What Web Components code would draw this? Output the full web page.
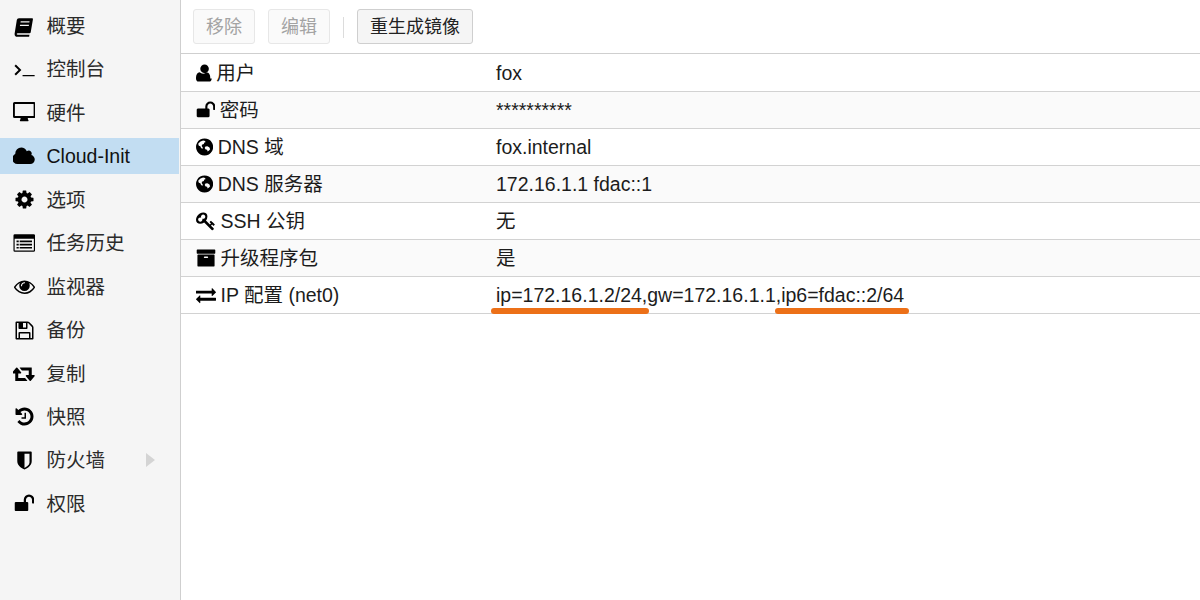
<!DOCTYPE html>
<html lang="zh">
<head>
<meta charset="utf-8">
<title>Cloud-Init</title>
<style>
  html, body { margin: 0; height: 100%; background: #fff; overflow: hidden; }
  body { font: 19.5px/22px "Liberation Sans", "Noto Sans CJK SC", sans-serif; color: #1c1c1c; }
</style>
</head>
<body>
<vm-panel>
  <vm-nav slot="nav">
    <vm-nav-item icon="book">概要</vm-nav-item>
    <vm-nav-item icon="terminal">控制台</vm-nav-item>
    <vm-nav-item icon="desktop">硬件</vm-nav-item>
    <vm-nav-item icon="cloud" selected>Cloud-Init</vm-nav-item>
    <vm-nav-item icon="cog">选项</vm-nav-item>
    <vm-nav-item icon="list">任务历史</vm-nav-item>
    <vm-nav-item icon="eye">监视器</vm-nav-item>
    <vm-nav-item icon="floppy">备份</vm-nav-item>
    <vm-nav-item icon="retweet">复制</vm-nav-item>
    <vm-nav-item icon="history">快照</vm-nav-item>
    <vm-nav-item icon="shield" expandable>防火墙</vm-nav-item>
    <vm-nav-item icon="unlock">权限</vm-nav-item>
  </vm-nav>
  <vm-toolbar slot="toolbar">
    <vm-button disabled>移除</vm-button>
    <vm-button disabled>编辑</vm-button>
    <vm-sep></vm-sep>
    <vm-button>重生成镜像</vm-button>
  </vm-toolbar>
  <vm-row icon="user">用户<span slot="value">fox</span></vm-row>
  <vm-row icon="unlock" alt>密码<span slot="value">**********</span></vm-row>
  <vm-row icon="globe">DNS 域<span slot="value">fox.internal</span></vm-row>
  <vm-row icon="globe" alt>DNS 服务器<span slot="value">172.16.1.1 fdac::1</span></vm-row>
  <vm-row icon="key">SSH 公钥<span slot="value">无</span></vm-row>
  <vm-row icon="archive" alt>升级程序包<span slot="value">是</span></vm-row>
  <vm-row icon="exchange">IP 配置 (net0)<span slot="value">ip=172.16.1.2/24,gw=172.16.1.1,ip6=fdac::2/64</span>
    <vm-mark slot="value" left="-5" width="158"></vm-mark>
    <vm-mark slot="value" left="279" width="134"></vm-mark>
  </vm-row>
</vm-panel>

<script>
const ICONS = {
  book: ['0 0 1664 1792', 'M420 190h1130q80 0 66 80l-190 1110q-14 90-100 90H330q-100 0-100 70t100 70h990l-30 170H270Q50 1780 50 1540q0-50 15-120L240 340q20-150 180-150zM570 450l-20 110h760l20-110zM520 740l-20 110h760l20-110z'],
  terminal: ['0 0 1792 1792', 'M40 590l120-120 470 470-470 470-120-120 350-350zM730 1370h1030v100H730z'],
  desktop: ['0 0 1920 1792', 'M130 0h1660q130 0 130 130v1110q0 130-130 130h-530q0 120 60 190 20 30-10 60-15 15-50 15H650q-35 0-50-15-30-30-10-60 60-70 60-190H130q-130 0-130-130V130Q0 0 130 0zm50 170q-20 0-20 20v980q0 20 20 20h1560q20 0 20-20V190q0-20-20-20z'],
  cloud: ['0 0 1920 1792', 'M1856 1152q0 159-112.5 271.5t-271.5 112.5h-1088q-185 0-316.5-131.5t-131.5-316.5q0-132 71-241.5t187-163.5q-2-28-2-43 0-212 150-362t362-150q158 0 286.5 88t187.5 230q70-62 166-62 106 0 181 75t75 181q0 75-41 138 129 30 213 134.5t84 239.5z'],
  cog: ['0 0 1792 1792', 'M1152 896q0-106-75-181t-181-75-181 75-75 181 75 181 181 75 181-75 75-181zm512-109v222q0 12-8 23t-20 13l-185 28q-19 54-39 91 35 50 107 138 10 12 10 25t-9 23q-27 37-99 108t-94 71q-12 0-26-9l-138-108q-44 23-91 38-16 136-29 186-7 28-36 28h-222q-14 0-24.5-8.5t-11.5-21.5l-28-184q-49-16-90-37l-141 107q-10 9-25 9-14 0-25-11-126-114-165-168-7-10-7-23 0-12 8-23 15-21 51-66.5t54-70.5q-27-50-41-99l-183-27q-13-2-21-12.5t-8-23.5v-222q0-12 8-23t19-13l186-28q14-46 39-92-40-57-107-138-10-12-10-24 0-10 9-23 26-36 98.5-107.5t94.5-71.5q13 0 26 10l138 107q44-23 91-38 16-136 29-186 7-28 36-28h222q14 0 24.5 8.5t11.5 21.5l28 184q49 16 90 37l142-107q9-9 24-9 13 0 25 10 129 119 165 170 7 8 7 22 0 12-8 23-15 21-51 66.5t-54 70.5q26 50 41 98l183 28q13 2 21 12.5t8 23.5z'],
  list: ['0 0 1920 1792', 'M150 100h1620q110 0 110 110v1280q0 110-110 110H150q-110 0-110-110V210q0-110 110-110zm-10 390v980q0 30 30 30h1580q30 0 30-30V490zM300 650h190v140H300zm270 0h1050v140H570zM300 920h190v140H300zm270 0h1050v140H570zM300 1190h190v140H300zm270 0h1050v140H570z'],
  eye: ['0 0 1792 1792', 'M1664 960q-152-236-381-353 61 104 61 225 0 185-131.5 316.5t-316.5 131.5-316.5-131.5-131.5-316.5q0-121 61-225-229 117-381 353 133 205 333.5 326.5t434.5 121.5 434.5-121.5 333.5-326.5zm-720-384q0-20-14-34t-34-14q-125 0-214.5 89.5t-89.5 214.5q0 20 14 34t34 14 34-14 14-34q0-86 61-147t147-61q20 0 34-14t14-34zm848 384q0 34-20 69-140 230-376.5 368.5t-499.5 138.5-499.5-139-376.5-368q-20-35-20-69t20-69q140-229 376.5-368t499.5-139 499.5 139 376.5 368q20 35 20 69z'],
  floppy: ['0 0 1792 1792', 'M512 1536h768v-384h-768v384zm896 0h128v-896q0-14-10-38.5t-20-34.5l-281-281q-10-10-34-20t-39-10v416q0 40-28 68t-68 28h-576q-40 0-68-28t-28-68v-416h-128v1280h128v-416q0-40 28-68t68-28h832q40 0 68 28t28 68v416zm-384-928v-320q0-13-9.5-22.5t-22.5-9.5h-192q-13 0-22.5 9.5t-9.5 22.5v320q0 13 9.5 22.5t22.5 9.5h192q13 0 22.5-9.5t9.5-22.5zm640 32v928q0 40-28 68t-68 28h-1344q-40 0-68-28t-28-68v-1344q0-40 28-68t68-28h928q40 0 88 20t76 48l280 280q28 28 48 76t20 88z'],
  retweet: ['0 0 1920 1792', 'M1216 1504q0 13-9.5 22.5t-22.5 9.5h-960q-8 0-13.5-2t-9-7-5.5-8-3-11.5-1-11.5v-600h-192q-26 0-45-19t-19-45q0-24 15-41l320-384q19-22 49-22t49 22l320 384q15 17 15 41 0 26-19 45t-45 19h-192v384h576q16 0 25 11l160 192q7 10 7 21zm640-416q0 24-15 41l-320 384q-20 23-49 23t-49-23l-320-384q-15-17-15-41 0-26 19-45t45-19h192v-384h-576q-16 0-25-12l-160-192q-7-9-7-20 0-13 9.5-22.5t22.5-9.5h960q8 0 13.5 2t9 7 5.5 8 3 11.5 1 11.5v600h192q26 0 45 19t19 45z'],
  history: ['0 0 1792 1792', 'M1664 896q0 156-61 298t-164 245-245 164-298 61q-172 0-327-72.5t-264-204.5q-7-10-6.5-22.5t8.5-20.5l137-138q10-9 25-9 16 2 23 12 73 95 179 147t225 52q104 0 198.5-40.5t163.5-109.5 109.5-163.5 40.5-198.5-40.5-198.5-109.5-163.5-163.5-109.5-198.5-40.5q-98 0-188 35.5t-160 101.5l137 138q31 30 14 69-17 40-59 40h-448q-26 0-45-19t-19-45v-448q0-42 40-59 39-17 69 14l130 129q107-101 244.5-156.5t284.5-55.5q156 0 298 61t245 164 164 245 61 298zm-640-288v448q0 14-9 23t-23 9h-320q-14 0-23-9t-9-23v-64q0-14 9-23t23-9h224v-352q0-14 9-23t23-9h64q14 0 23 9t9 23z'],
  shield: ['0 0 1792 1792', 'M350 130h1092q70 0 70 70v760q0 300-300 530-130 100-316 180-186-80-316-180-300-230-300-530V200q0-70 70-70zm546 190v1210q130-60 225-135 200-160 200-310V320z'],
  unlock: ['0 0 1728 1792', 'M1728 576v256q0 26-19 45t-45 19h-64q-26 0-45-19t-19-45v-256q0-106-75-181t-181-75-181 75-75 181v192h96q40 0 68 28t28 68v576q0 40-28 68t-68 28h-960q-40 0-68-28t-28-68v-576q0-40 28-68t68-28h672v-192q0-185 131.5-316.5t316.5-131.5 316.5 131.5 131.5 316.5z'],
  user: ['0 0 1408 1792', 'M1408 1399q0 109-62.5 187t-150.5 78h-982q-88 0-150.5-78t-62.5-187q0-85 8.5-160.5t31.5-152 58.5-131 94-89 134.5-34.5q131 128 313 128t313-128q76 0 134.5 34.5t94 89 58.5 131 31.5 152 8.5 160.5zm-256-887q0 159-112.5 271.5t-271.5 112.5-271.5-112.5-112.5-271.5 112.5-271.5 271.5-112.5 271.5 112.5 112.5 271.5z'],
  globe: ['0 0 1536 1792', 'M768 128q209 0 385.5 103t279.5 279.5 103 385.5-103 385.5-279.5 279.5-385.5 103-385.5-103-279.5-279.5-103-385.5 103-385.5 279.5-279.5 385.5-103zm-130 190q-250 40-430 260 0 130 50 200l130 40 60 150 120 110 40-130-90-120 10-130 170-70 50-130 100-30-30-110zm400 990q150-70 230-210l-80-170-170-90-170 20-70 120 90 140 130 20z'],
  key: ['0 0 1792 1792', 'M832 512q0-80-56-136t-136-56-136 56-56 136q0 42 19 83-41-19-83-19-80 0-136 56t-56 136 56 136 136 56 136-56 56-136q0-42-19-83 41 19 83 19 80 0 136-56t56-136zm851 704q0 17-49 66t-66 49q-9 0-28.5-16t-36.5-33-38.5-40-24.5-26l-96 96 220 220q28 28 28 68 0 42-39 81t-81 39q-40 0-68-28l-671-671q-176 131-365 131-163 0-265.5-102.5t-102.5-265.5q0-160 95-313t248-248 313-95q163 0 265.5 102.5t102.5 265.5q0 189-131 365l355 355 96-96q-3-3-26-24.5t-40-38.5-33-36.5-16-28.5q0-17 49-66t66-49q13 0 23 10 6 6 46 44.5t82 79.5 86.5 86 73 78 28.5 41z'],
  archive: ['0 0 1792 1792', 'M1088 832q0-26-19-45t-45-19h-256q-26 0-45 19t-19 45 19 45 45 19h256q26 0 45-19t19-45zm576-192v960q0 26-19 45t-45 19h-1408q-26 0-45-19t-19-45v-960q0-26 19-45t45-19h1408q26 0 45 19t19 45zm64-448v256q0 26-19 45t-45 19h-1536q-26 0-45-19t-19-45v-256q0-26 19-45t45-19h1536q26 0 45 19t19 45z'],
  exchange: ['0 0 1792 1792', 'M1792 1184v192q0 13-9.5 22.5t-22.5 9.5h-1376v192q0 13-9.5 22.5t-22.5 9.5q-12 0-24-10l-319-320q-9-9-9-22 0-14 9-23l320-320q9-9 23-9 13 0 22.5 9.5t9.5 22.5v192h1376q13 0 22.5 9.5t9.5 22.5zm0-544q0 14-9 23l-320 320q-9 9-23 9-13 0-22.5-9.5t-9.5-22.5v-192h-1376q-13 0-22.5-9.5t-9.5-22.5v-192q0-13 9.5-22.5t22.5-9.5h1376v-192q0-14 9-23t23-9q12 0 24 10l319 319q9 9 9 23z']
};

function shadow(el, html) {
  el.attachShadow({mode: 'open'}).innerHTML = html;
}

class VmIcon extends HTMLElement {
  connectedCallback() {
    const [box, d] = ICONS[this.getAttribute('name')];
    const [, , w, h] = box.split(' ');
    const size = Number(this.getAttribute('size') || 20);
    shadow(this, `
      <style>:host { display: inline-flex; flex: none; } svg { display: block; fill: #000; }</style>
      <svg width="${size * w / h}" height="${size}" viewBox="${box}"><path fill-rule="evenodd" d="${d}"/></svg>`);
  }
}

class VmPanel extends HTMLElement {
  constructor() {
    super();
    shadow(this, `
      <style>
        :host { display: flex; width: 1200px; height: 600px; }
        .nav { flex: none; width: 180px; background: #f5f5f5; border-right: 1px solid #cfcfcf; }
        .main { flex: 1; min-width: 0; display: flex; flex-direction: column; }
      </style>
      <div class="nav"><slot name="nav"></slot></div>
      <div class="main"><slot name="toolbar"></slot><slot></slot></div>`);
  }
}

class VmNav extends HTMLElement {
  constructor() {
    super();
    shadow(this, `
      <style>:host { display: grid; grid-auto-rows: 36px; row-gap: 7.45px; padding-top: 8px; }</style>
      <slot></slot>`);
  }
}

class VmNavItem extends HTMLElement {
  connectedCallback() {
    shadow(this, `
      <style>
        :host { display: flex; align-items: center; width: 179px; color: #2b2b2b; }
        :host([selected]) { background: #c2ddf2; color: #111; }
        .ico { flex: none; width: 24px; margin-left: 12px; margin-right: 10.5px; display: flex; justify-content: center; }
        .arrow { position: absolute; left: 146px; width: 0; height: 0; border-left: 9px solid #d4d4d4; border-top: 7.5px solid transparent; border-bottom: 7.5px solid transparent; }
      </style>
      <span class="ico"><vm-icon size="21" name="${this.getAttribute('icon')}"></vm-icon></span>
      <slot></slot>
      ${this.hasAttribute('expandable') ? '<span class="arrow"></span>' : ''}`);
  }
}

class VmToolbar extends HTMLElement {
  constructor() {
    super();
    shadow(this, `
      <style>
        :host { display: flex; align-items: center; gap: 13px; height: 53px; padding: 0 12px; margin-bottom: 1px; border-bottom: 1px solid #cfcfcf; }
      </style>
      <slot></slot>`);
  }
}

class VmButton extends HTMLElement {
  constructor() {
    super();
    shadow(this, `
      <style>
        :host { display: inline-flex; align-items: center; height: 33px; padding: 0 12px; background: #f5f5f5; border: 1px solid #cfcfcf; border-radius: 3px; color: #222; font-size: 18px; }
        :host([disabled]) { background: #fafafa; border-color: #e7e7e7; color: #a3a3a3; }
      </style>
      <slot></slot>`);
  }
}

class VmSep extends HTMLElement {
  constructor() {
    super();
    shadow(this, `<style>:host { display: block; width: 1px; height: 21px; margin-top: 1px; background: #dcdcdc; }</style>`);
  }
}

class VmRow extends HTMLElement {
  connectedCallback() {
    shadow(this, `
      <style>
        :host { display: flex; align-items: center; height: 36px; border-bottom: 1px solid #d2d2d2; flex: none; }
        :host([alt]) { background: #fafafa; }
        .label { flex: none; width: 315px; box-sizing: border-box; padding-left: 15px; display: flex; align-items: center; gap: 4.5px; }
        .value { position: relative; }
      </style>
      <div class="label"><vm-icon name="${this.getAttribute('icon')}"></vm-icon><span><slot></slot></span></div>
      <div class="value"><slot name="value"></slot></div>`);
  }
}

// orange hand-drawn underline that sits over the row border
class VmMark extends HTMLElement {
  connectedCallback() {
    shadow(this, `
      <style>
        :host { position: absolute; left: ${this.getAttribute('left')}px; width: ${this.getAttribute('width')}px; top: 24px; height: 6px; border-radius: 3px; background: #ec7018; }
      </style>`);
  }
}

customElements.define('vm-icon', VmIcon);
customElements.define('vm-panel', VmPanel);
customElements.define('vm-nav', VmNav);
customElements.define('vm-nav-item', VmNavItem);
customElements.define('vm-toolbar', VmToolbar);
customElements.define('vm-button', VmButton);
customElements.define('vm-sep', VmSep);
customElements.define('vm-row', VmRow);
customElements.define('vm-mark', VmMark);
</script>
</body>
</html>
